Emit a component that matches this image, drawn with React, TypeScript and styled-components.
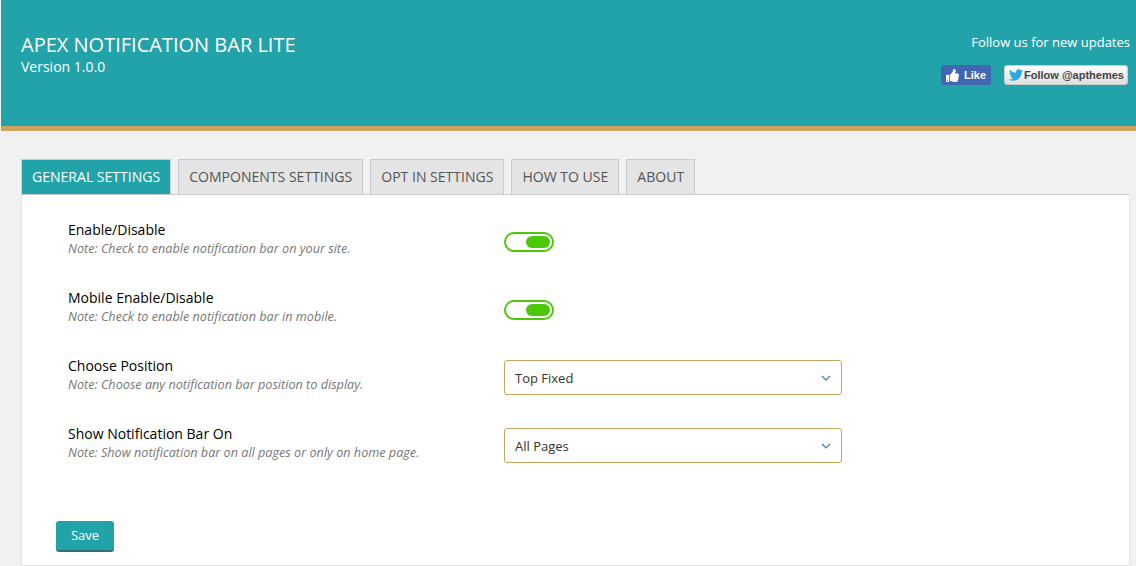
import * as React from "react";
import styled, { createGlobalStyle } from "styled-components";
import { FaThumbsUp, FaTwitter } from "react-icons/fa";

const GlobalStyle = createGlobalStyle`
  html, body {
    margin: 0;
    height: 566px;
    overflow: hidden;
    background: #f1f1f1;
    font-family: "Open Sans", sans-serif;
  }
`;

const Page = styled.div`
  padding-left: 1px;
`;

const Header = styled.header`
  display: flex;
  justify-content: space-between;
  height: 126px;
  background: #22a3a9;
  border-bottom: 5px solid #c9a45c;
  color: #fff;
`;

const Brand = styled.div`
  padding: 32px 0 0 20px;
`;

const Title = styled.div`
  font-size: 20px;
  line-height: 25px;
`;

const Version = styled.div`
  font-size: 14px;
  line-height: 19px;
`;

const Social = styled.div`
  display: flex;
  flex-direction: column;
  align-items: flex-end;
  padding: 33px 6px 0 0;
`;

const FollowText = styled.div`
  font-size: 13px;
  line-height: 18px;
`;

const SocialRow = styled.div`
  display: flex;
  gap: 13px;
  margin: 14px 2px 0 0;
`;

const LikeButton = styled.div`
  display: flex;
  align-items: center;
  justify-content: center;
  gap: 5px;
  width: 50px;
  height: 20px;
  border-radius: 2px;
  background: #4267b2;
  font: bold 11px "Liberation Sans", sans-serif;
`;

const TweetButton = styled.div`
  display: flex;
  align-items: center;
  gap: 1px;
  box-sizing: border-box;
  width: 124px;
  height: 20px;
  padding-left: 4px;
  border: 1px solid #ccc;
  border-radius: 3px;
  background: linear-gradient(#fff, #dedede);
  color: #444;
  font: bold 11px "Liberation Sans", sans-serif;
  svg {
    color: #2aa9e0;
  }
`;

const Content = styled.main`
  padding: 28px 6px 0 20px;
`;

const Tabs = styled.nav`
  display: flex;
  gap: 7px;
  margin-bottom: -1px;
`;

const Tab = styled.div<{ $active?: boolean }>`
  box-sizing: border-box;
  height: 36px;
  padding: 0 10px;
  border: 1px solid #ccc;
  background: ${(p) => (p.$active ? "#22a3a9" : "#e4e4e4")};
  color: ${(p) => (p.$active ? "#fff" : "#555")};
  font-size: 14.04px;
  line-height: 34px;
  white-space: nowrap;
`;

const Panel = styled.section`
  box-sizing: border-box;
  height: 372px;
  padding: 25px 34px 0 46px;
  background: #fff;
  border: 1px solid #e4e4e4;
  border-top-color: #ccc;
`;

const Row = styled.div`
  display: flex;
  height: 68px;
`;

const Info = styled.div`
  width: 436px;
`;

const Label = styled.div`
  font-size: 14px;
  font-weight: 500;
  line-height: 19px;
  color: #000;
`;

const Note = styled.div`
  margin-top: 1px;
  font-size: 12.65px;
  font-style: italic;
  line-height: 17px;
  color: #777;
`;

const Toggle = styled.div`
  position: relative;
  box-sizing: border-box;
  width: 50px;
  height: 20px;
  margin-top: 12px;
  border: 2px solid #4bc807;
  border-radius: 10px;
  background: #fff;
  &::after {
    content: "";
    position: absolute;
    top: 2px;
    right: 2px;
    width: 24px;
    height: 12px;
    border-radius: 6px;
    background: #4bc807;
  }
`;

const Select = styled.div`
  display: flex;
  align-items: center;
  justify-content: space-between;
  box-sizing: border-box;
  width: 338px;
  height: 35px;
  margin-top: 4px;
  padding: 0 10px;
  border: 1px solid #c9a45c;
  border-radius: 3px;
  font-size: 13px;
  color: #333;
  svg {
    display: block;
  }
`;

const SaveButton = styled.button`
  display: block;
  width: 58px;
  height: 31px;
  margin: 29px 0 0 -12px;
  padding: 0 0 1px;
  border: 0;
  border-bottom: 2px solid #3b6d78;
  border-radius: 3px;
  background: #22a3a9;
  color: #fff;
  font-family: "Open Sans", sans-serif;
  font-size: 13px;
`;

function Chevron() {
  return (
    <svg width="10" height="6" viewBox="0 0 10 6" fill="none">
      <path d="M1 1l4 4 4-4" stroke="#3d7ea6" strokeWidth="1.2" />
    </svg>
  );
}

const settings = [
  { label: "Enable/Disable", note: "Note: Check to enable notification bar on your site.", toggle: true },
  { label: "Mobile Enable/Disable", note: "Note: Check to enable notification bar in mobile.", toggle: true },
  { label: "Choose Position", note: "Note: Choose any notification bar position to display.", value: "Top Fixed" },
  { label: "Show Notification Bar On", note: "Note: Show notification bar on all pages or only on home page.", value: "All Pages" },
];

const tabs = ["GENERAL SETTINGS", "COMPONENTS SETTINGS", "OPT IN SETTINGS", "HOW TO USE", "ABOUT"];

export default function App() {
  return (
    <Page>
      <GlobalStyle />
      <Header>
        <Brand>
          <Title>APEX NOTIFICATION BAR LITE</Title>
          <Version>Version 1.0.0</Version>
        </Brand>
        <Social>
          <FollowText>Follow us for new updates</FollowText>
          <SocialRow>
            <LikeButton>
              <FaThumbsUp size={13} />
              Like
            </LikeButton>
            <TweetButton>
              <FaTwitter size={14} />
              Follow @apthemes
            </TweetButton>
          </SocialRow>
        </Social>
      </Header>
      <Content>
        <Tabs>
          {tabs.map((t, i) => (
            <Tab key={t} $active={i === 0}>
              {t}
            </Tab>
          ))}
        </Tabs>
        <Panel>
          {settings.map((s) => (
            <Row key={s.label}>
              <Info>
                <Label>{s.label}</Label>
                <Note>{s.note}</Note>
              </Info>
              {s.toggle ? (
                <Toggle />
              ) : (
                <Select>
                  {s.value}
                  <Chevron />
                </Select>
              )}
            </Row>
          ))}
          <SaveButton>Save</SaveButton>
        </Panel>
      </Content>
    </Page>
  );
}
